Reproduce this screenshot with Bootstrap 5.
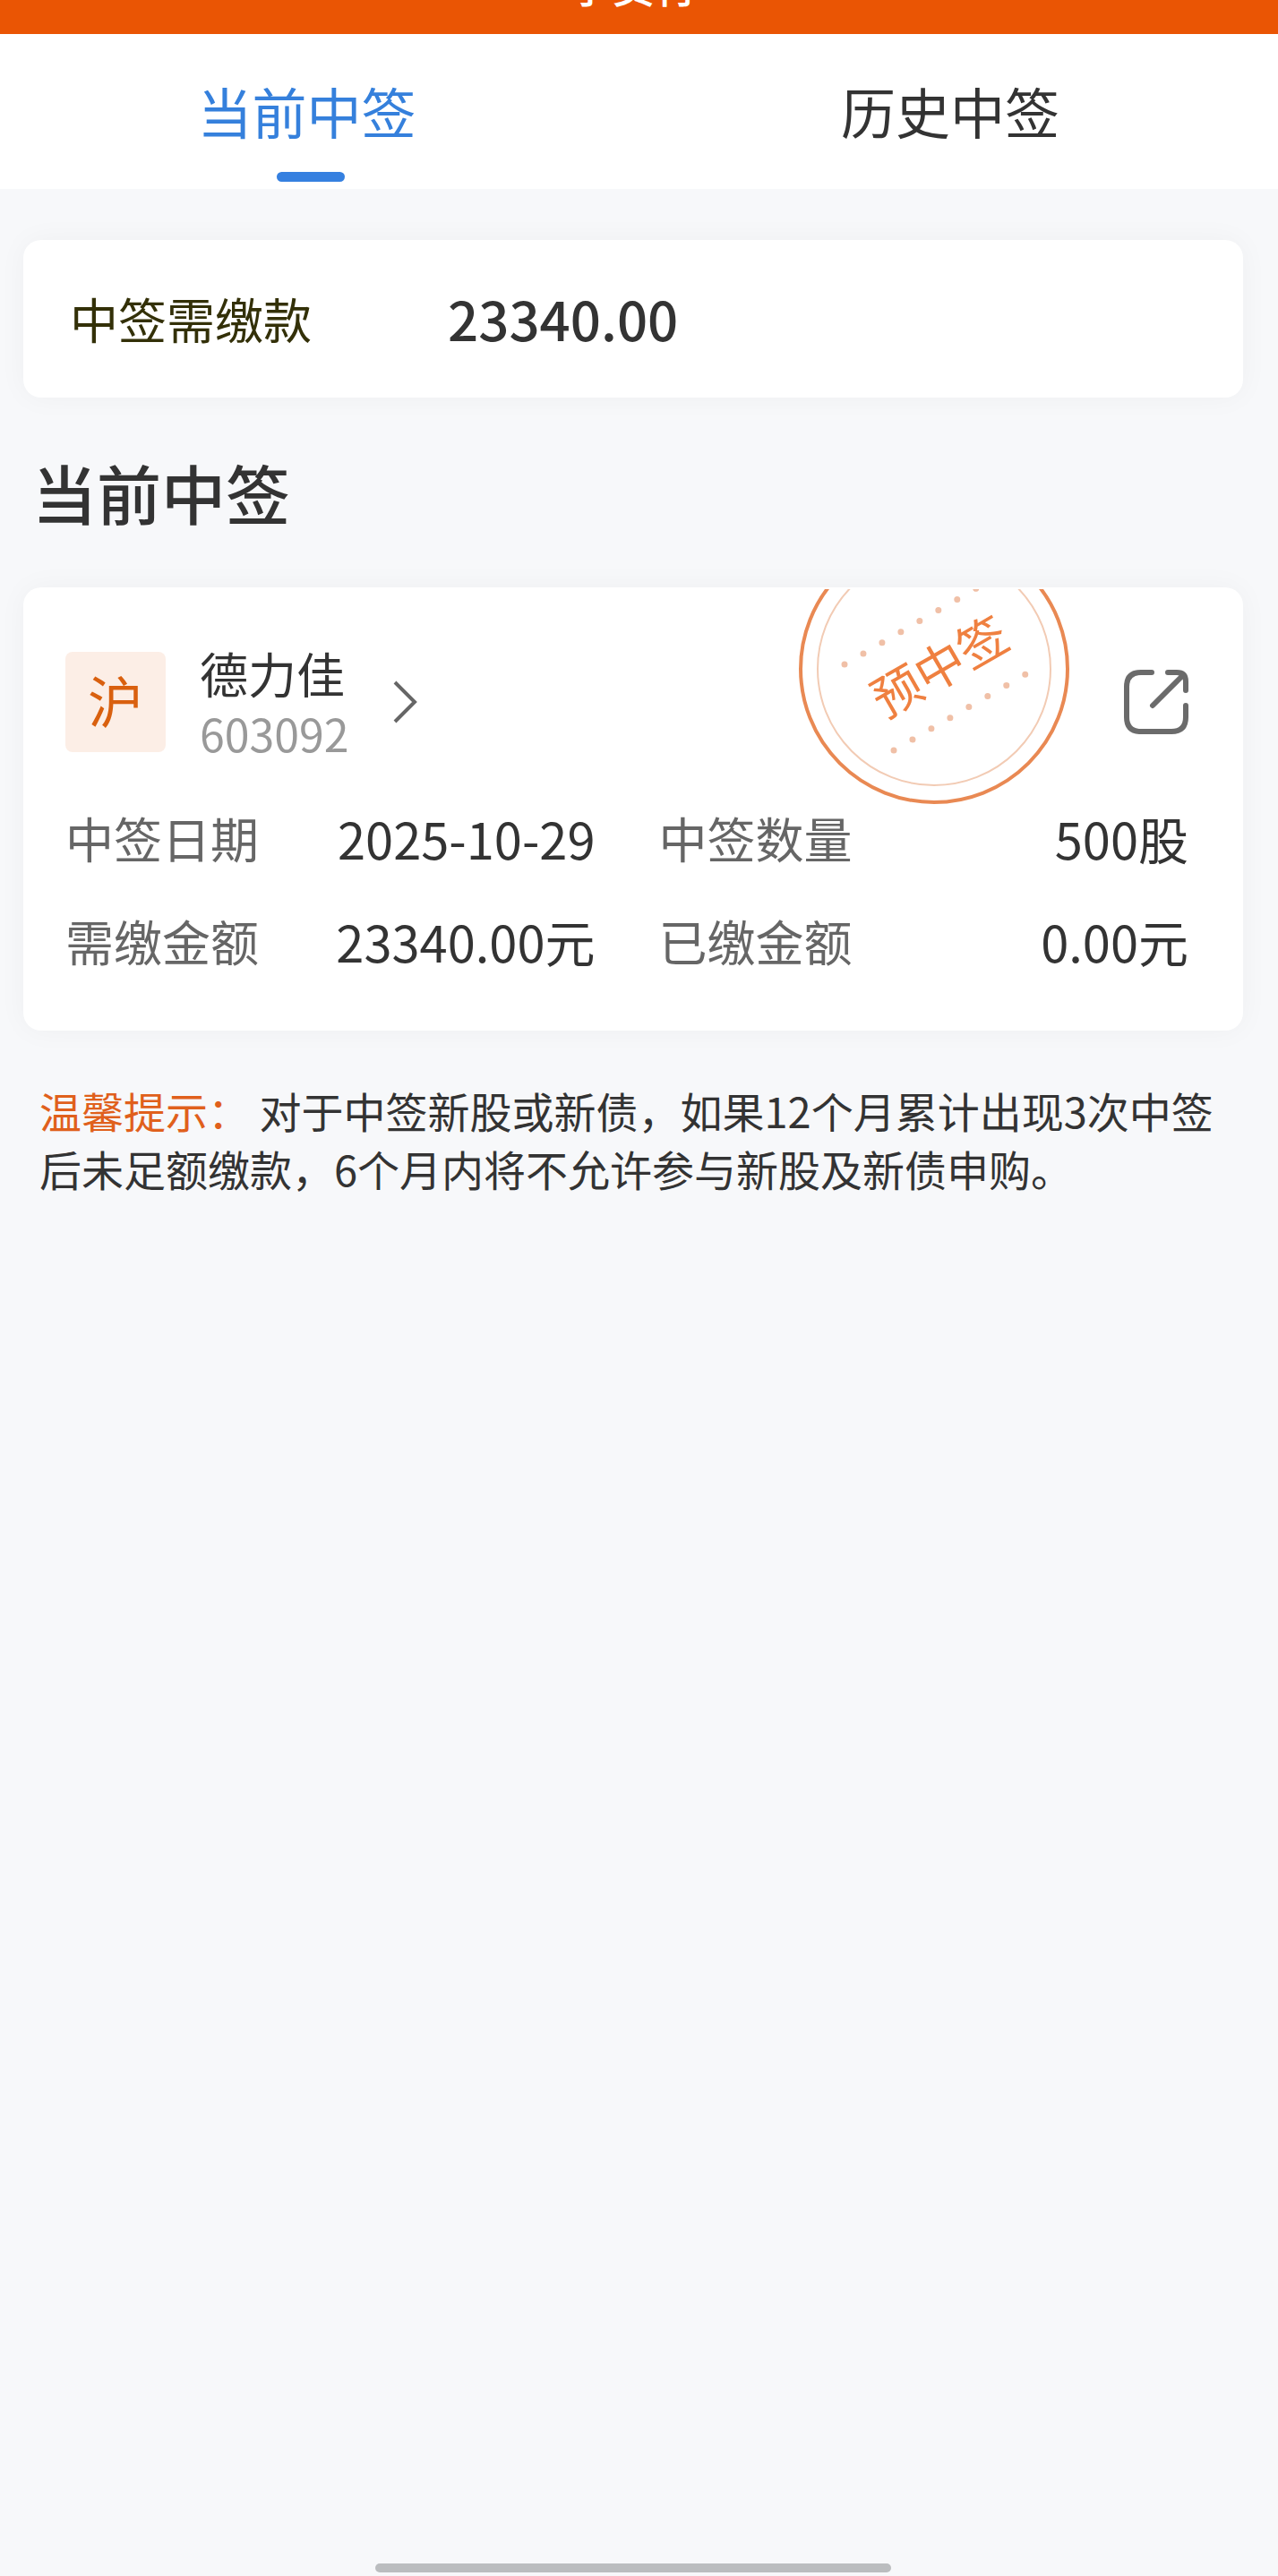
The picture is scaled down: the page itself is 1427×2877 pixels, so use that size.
<!DOCTYPE html>
<html lang="zh-CN">
<head>
<meta charset="utf-8">
<meta name="viewport" content="width=device-width, initial-scale=1">
<title>当前中签</title>
<link href="https://cdn.jsdelivr.net/npm/bootstrap@5.3.0/dist/css/bootstrap.min.css" rel="stylesheet">
<style>
  body { background: #f7f8fa; color: #333; font-family: "Noto Sans CJK SC", sans-serif; }
  .app-bar { height: 38px; padding: 0 13px 32px 0; background: #ea5504; color: #fff; font-size: 48px; line-height: 48px; font-weight: 500; }
  .lot-tabs { height: 173px; }
  .lot-tabs .nav-link { padding: 56px 0 0; font-size: 61px; line-height: 60px; color: #333; }
  .lot-tabs .nav-link.active { color: #3580dc; }
  .tab-first { width: 48%; }
  .tab-second { padding-left: 10px; }
  .tab-line { width: 76px; height: 11px; margin-top: 38px; margin-left: 10px; border-radius: 6px; background: #3580e0; }
  .page-main { padding: 57px 39px 0 26px; }
  .panel { border: 0; border-radius: 20px; box-shadow: 0 0 32px rgba(0, 0, 0, .04); color: #333; }
  .due { height: 176px; padding: 0 52px 2px; }
  .due-label { width: 422px; font-size: 54px; color: #333008; }
  .due-sum { font-size: 60px; font-weight: 500; }
  .sect-title { margin: 61px 0 63px; padding-left: 10px; font-size: 72px; line-height: 88px; font-weight: 500; }
  .stock { padding: 72px 61px 43px 47px; overflow: hidden; border-radius: 20px; }
  .market { width: 112px; height: 112px; margin-right: 38px; padding-bottom: 6px; border-radius: 8px; background: #fceee6; color: #d9600f; font-size: 62px; line-height: 60px; }
  .stock-name { font-size: 54px; line-height: 48px; }
  .stock-code { margin-top: 20px; font-size: 50px; line-height: 44px; color: #999; }
  .chev { margin-left: 48px; }
  .stamp { position: absolute; left: 864px; top: 2px; }
  .stamp text { font-size: 55px; fill: #ef8040; }
  .facts { display: grid; grid-template-columns: 1fr 1fr; column-gap: 71px; margin: 38px 0 0; line-height: 115px; }
  .facts dt { font-size: 54px; font-weight: 400; color: #666; }
  .facts dd { margin: 0; font-size: 56px; }
  .tip { margin: 56px 0 0; padding-left: 18px; font-size: 47px; line-height: 65px; }
  .tip-head { color: #e0601c; }
  .home-line { width: 576px; height: 10px; margin: 0 auto 4px; border-radius: 5px; background: #bbbdbf; }
  .home-wrap { padding-right: 13px; }
</style>
</head>
<body>
<div class="d-flex flex-column min-vh-100">
  <header class="app-bar d-flex justify-content-center align-items-end overflow-hidden">
    <div>字贡行</div>
  </header>
  <nav class="lot-tabs nav bg-white flex-nowrap" aria-label="中签">
    <div class="tab-first">
      <a class="nav-link active d-flex flex-column align-items-center" href="#current" aria-current="page">当前中签<span class="tab-line"></span></a>
    </div>
    <div class="tab-second flex-grow-1">
      <a class="nav-link text-center" href="#history">历史中签</a>
    </div>
  </nav>
  <main class="page-main" id="current">
    <section class="panel due card flex-row align-items-center">
      <div class="due-label">中签需缴款</div>
      <div class="due-sum">23340.00</div>
    </section>
    <h1 class="sect-title">当前中签</h1>
    <section class="panel card">
      <div class="stock position-relative">
        <svg class="stamp" width="308" height="244" viewBox="890 658 308 244" role="img" aria-label="预中签">
          <circle cx="1043" cy="747" r="149" fill="none" stroke="#e98953" stroke-width="4"/>
          <circle cx="1043" cy="747" r="130" fill="none" stroke="#f2cbb4" stroke-width="2"/>
          <g fill="none" stroke="#f0c0a7" stroke-width="7" stroke-linecap="round" stroke-dasharray="0 24.2">
            <path d="M943 742L1091 656.600"/>
            <path d="M998 838L1146 752.600"/>
          </g>
          <text x="1049" y="765" text-anchor="middle" transform="rotate(-30 1049 744)">预中签</text>
        </svg>
        <div class="d-flex align-items-center">
          <div class="market d-flex align-items-center justify-content-center">沪</div>
          <a class="d-flex align-items-center text-reset text-decoration-none" href="#stock">
            <span><span class="stock-name d-block">德力佳</span><span class="stock-code d-block">603092</span></span>
            <svg class="chev" width="28" height="48" viewBox="0 0 28 48" fill="none" stroke="#666" stroke-width="4" aria-hidden="true"><path d="M3 2L25 24L3 46"/></svg>
          </a>
          <button class="btn p-0 border-0 ms-auto lh-1" type="button" aria-label="分享">
            <svg class="d-block" width="72" height="72" viewBox="0 0 72 72" fill="none" stroke="#6b6b6b" stroke-width="6" stroke-linecap="round" aria-hidden="true"><path d="M31 3H19Q3 3 3 19V53Q3 69 19 69H53Q69 69 69 53V40"/><path d="M49 3H59Q69 3 69 13V23M32 40L66 6"/></svg>
          </button>
        </div>
        <dl class="facts">
          <div class="d-flex justify-content-between"><dt>中签日期</dt><dd>2025-10-29</dd></div>
          <div class="d-flex justify-content-between"><dt>中签数量</dt><dd>500股</dd></div>
          <div class="d-flex justify-content-between"><dt>需缴金额</dt><dd>23340.00元</dd></div>
          <div class="d-flex justify-content-between"><dt>已缴金额</dt><dd>0.00元</dd></div>
        </dl>
      </div>
    </section>
    <p class="tip"><span class="tip-head">温馨提示：</span> 对于中签新股或新债，如果12个月累计出现3次中签后未足额缴款，6个月内将不允许参与新股及新债申购。</p>
  </main>
  <footer class="home-wrap mt-auto"><div class="home-line"></div></footer>
</div>
<script src="https://cdn.jsdelivr.net/npm/bootstrap@5.3.0/dist/js/bootstrap.bundle.min.js"></script>
</body>
</html>
